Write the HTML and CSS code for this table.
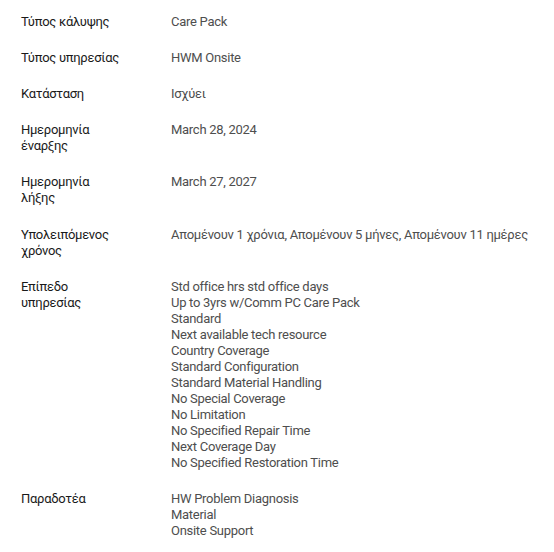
FILE: index.html
```html
<!DOCTYPE html>
<html lang="el">

<head>
    <meta charset="UTF-8">
    <meta name="viewport" content="width=device-width, initial-scale=1.0">
    <title>Εγγύηση</title>
    <link rel="stylesheet" href="styles.css">
</head>

<body>

    <div class="details">
        <div class="row">
            <div class="label">Τύπος κάλυψης</div>
            <div class="value">Care Pack</div>
        </div>

        <div class="row">
            <div class="label">Τύπος υπηρεσίας</div>
            <div class="value">HWM Onsite</div>
        </div>

        <div class="row">
            <div class="label">Κατάσταση</div>
            <div class="value">Ισχύει</div>
        </div>

        <div class="row">
            <div class="label">Ημερομηνία<br>έναρξης</div>
            <div class="value">March 28, 2024</div>
        </div>

        <div class="row">
            <div class="label">Ημερομηνία<br>λήξης</div>
            <div class="value">March 27, 2027</div>
        </div>

        <div class="row">
            <div class="label">Υπολειπόμενος<br>χρόνος</div>
            <div class="value">Απομένουν 1 χρόνια, Απομένουν 5 μήνες, Απομένουν 11 ημέρες</div>
        </div>

        <div class="row">
            <div class="label">Επίπεδο<br>υπηρεσίας</div>
            <div class="value">
                Std office hrs std office days<br>
                Up to 3yrs w/Comm PC Care Pack<br>
                Standard<br>
                Next available tech resource<br>
                Country Coverage<br>
                Standard Configuration<br>
                Standard Material Handling<br>
                No Special Coverage<br>
                No Limitation<br>
                No Specified Repair Time<br>
                Next Coverage Day<br>
                No Specified Restoration Time
            </div>
        </div>

        <div class="row">
            <div class="label">Παραδοτέα</div>
            <div class="value">
                HW Problem Diagnosis<br>
                Material<br>
                Onsite Support
            </div>
        </div>
    </div>

</body>

</html>
```

FILE: styles.css
```css
body {
    font-family: 'Roboto', sans-serif;
    font-size: 13px;
    line-height: 16px;
    letter-spacing: -0.28px;
    margin: 0;
    background: #fff;
}

.details {
    padding: 14px 21px 0 21px;
}

.row {
    display: grid;
    grid-template-columns: 150px 1fr;
    padding-bottom: 20px;
}

.row:nth-child(n+4) {
    padding-bottom: 20.3px;
}

.label {
    color: #1a1a1a;
}

.value {
    color: #4e4e4e;
    white-space: nowrap;
}
```
